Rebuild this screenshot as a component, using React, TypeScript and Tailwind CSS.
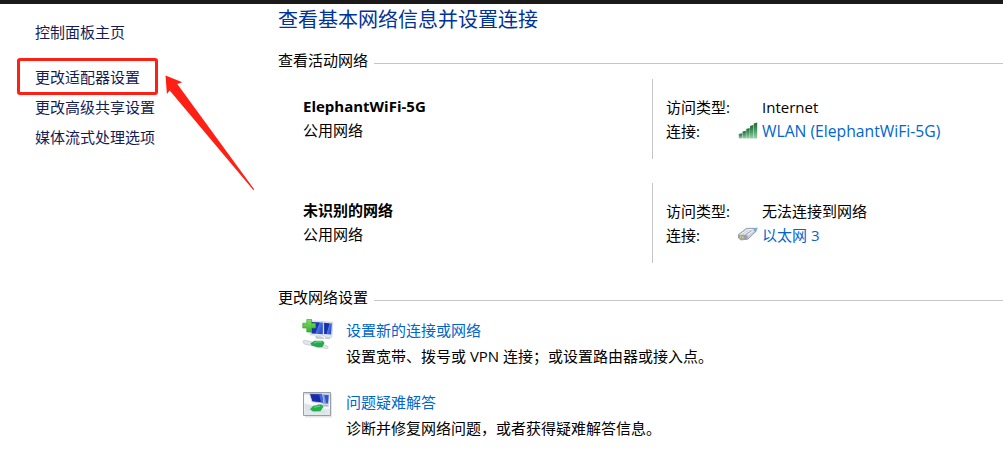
import type { ReactNode } from 'react';

function SectionHeading({ children }: { children: ReactNode }) {
  return (
    <div className="flex h-6 items-center">
      <h2 className="w-24 whitespace-nowrap pb-0.5 leading-6">{children}</h2>
      <span className="mt-1 h-px flex-1 bg-[#c6c6c6]" />
    </div>
  );
}

function SignalIcon() {
  return (
    <svg width="20" height="18" viewBox="0 0 20 18">
      <defs>
        <linearGradient id="bar" x1="0" y1="0" x2="0" y2="1">
          <stop offset="0" stopColor="#1d6a38" />
          <stop offset="0.5" stopColor="#4b9a66" />
          <stop offset="1" stopColor="#9fd0ab" />
        </linearGradient>
      </defs>
      <g fill="url(#bar)">
        <path d="M.8 12l3.4-.8V16.5H.8z" />
        <path d="M4.5 9.6l3.4-.9V16.5H4.5z" />
        <path d="M8.2 6.9l3.5-1V16.5H8.2z" />
        <path d="M12 4l3.4-1v13.5H12z" />
        <path d="M15.7 1.4l3.5-1V16.5h-3.5z" />
      </g>
    </svg>
  );
}

function EthernetIcon() {
  return (
    <svg width="20" height="18" viewBox="0 0 20 18">
      <path d="M12 2.8l7.8-1.4-1.6 4.4-3.6 2.4z" fill="#62b8e2" />
      <path d="M.5 8.5L8.5 2.4l7.5-.1 1.4 3.5-7.6 7.4-7 .7L.5 12z" fill="#cbd1da" stroke="#828b98" strokeWidth=".8" />
      <path d="M1 9.2l6.6-.4 2 .9v3.3l-6.8.7L1 12z" fill="#9aa1aa" />
      <path d="M2 9.8l1.3.1v2.7L2 12zM4.4 10l1.2-.1v2.9H4.4z" fill="#dcc877" />
      <path d="M3 8.2l6.5-4.4 5-.5M6 8.1l6-3.4M9.5 9l5.7-4" stroke="#f3f6fa" strokeWidth=".9" fill="none" />
      <path d="M7.6 8.7L13 4.7" stroke="#8993a2" strokeWidth=".6" fill="none" />
    </svg>
  );
}

function NewConnectionIcon() {
  return (
    <svg width="32" height="32" viewBox="0 0 32 32">
      <defs>
        <linearGradient id="screen" x1="0" y1="0" x2="1" y2=".4">
          <stop offset="0" stopColor="#12239a" />
          <stop offset=".62" stopColor="#1836b8" />
          <stop offset=".68" stopColor="#4f76e0" />
          <stop offset="1" stopColor="#2750cd" />
        </linearGradient>
        <linearGradient id="plus" x1="0" y1="0" x2="0" y2="1">
          <stop offset="0" stopColor="#85dc68" />
          <stop offset="1" stopColor="#37b32c" />
        </linearGradient>
      </defs>
      <path d="M19 2.4l12 .8-1 15-3 .8-6-2z" fill="#e0e4eb" stroke="#c0c6cf" strokeWidth=".5" />
      <path d="M21.3 3.8l8.6.6-.8 11.2-7-.6z" fill="url(#screen)" />
      <path d="M7 1.6l14.8.8v14.4L8 16z" fill="#e6e9ee" stroke="#c5cbd4" strokeWidth=".5" />
      <path d="M9 3l11.8.6v11.6L9.6 14.4z" fill="url(#screen)" />
      <path d="M13 17l7 .6 3 2.4-9-.3zM23 18l5 .6v1.6l-5-.4z" fill="#c4cad2" />
      <path d="M1 22.6c0-1.2 1.4-1.6 2.8-1.2l21 5.3c2 .6 1.6 3.2-.3 2.9L4 25.4c-2-.2-3-1.3-3-2.8z" fill="#e1e6ea" stroke="#b5bcc3" strokeWidth=".6" />
      <path d="M8.5 24.2l4-2.4 8-.1 2 2-2 4.2-4.5.5-6.5-2z" fill="#26a853" />
      <path d="M12 24l3-1.2 5 .2" stroke="#74d98b" fill="none" />
      <path d="M4.8.4h4.8V4.2h4v4.8h-4v4H4.8v-4h-4V4.2h4z" fill="url(#plus)" stroke="#36a52e" strokeWidth=".7" />
    </svg>
  );
}

function TroubleshootIcon() {
  return (
    <svg width="32" height="28" viewBox="0 0 32 28">
      <path d="M3 3h27v23.5H3z" fill="#c9c9c9" opacity=".5" />
      <path d="M1.5 1.5h27v23h-27z" fill="#f7f9fb" stroke="#9a9da3" />
      <path d="M2 2h26v1.5H2z" fill="#d3d6db" />
      <path d="M2 19l26-1.5V24H2z" fill="#e3e8ee" />
      <path d="M19 3l8.4.3-.8 10.4-6-.7z" fill="#7897df" stroke="#dce2ec" strokeWidth=".8" />
      <path d="M22.5 4l4 .2-.5 7.8-2-.3z" fill="#2d55c8" />
      <path d="M7.5 2.6l12.8.2 1.5 9.4-11.8-1.5z" fill="#182ba8" stroke="#d3dae8" strokeWidth=".8" />
      <path d="M17 3.2l3 .1 1.2 8-2.2-.3z" fill="#3f68d8" />
      <path d="M15 13l11 1 1 1.8-10-.5z" fill="#b4bbc6" />
      <path d="M2.5 12.5l7 1.8 15 6.4-2 1.8L4 19.4l-1.5-2z" fill="#dbe1e5" />
      <path d="M8 18.2l3.2-3.4 8-1.2 2.3 2.2-3 4.4-7.5.4z" fill="#22b14c" />
      <path d="M12 16.3l6-1.2" stroke="#6ad786" />
    </svg>
  );
}

interface NetworkProps {
  name: string;
  access: string;
  icon: ReactNode;
  link: ReactNode;
}

function Network({ name, access, icon, link }: NetworkProps) {
  return (
    <div className="flex h-20 pl-[25px]">
      <div className="w-[349px] pt-[15px]">
        <p className="font-bold">{name}</p>
        <p>公用网络</p>
      </div>
      <div className="flex-1 border-l border-[#c6c6c6] pt-4 pl-[13px]">
        <div className="flex">
          <span className="w-24">访问类型:</span>
          <span>{access}</span>
        </div>
        <div className="flex">
          <span className="w-[72px]">连接:</span>
          <span className="w-6 pt-[3px]">{icon}</span>
          <a className="whitespace-nowrap text-[#0066cc]">{link}</a>
        </div>
      </div>
    </div>
  );
}

function Task({ icon, title, text }: { icon: ReactNode; title: string; text: string }) {
  return (
    <div className="flex h-[72px] pl-6">
      <div className="w-11 pt-0.5">{icon}</div>
      <div className="leading-[26px]">
        <a className="block text-[#0066cc]">{title}</a>
        <p className="whitespace-nowrap">{text}</p>
      </div>
    </div>
  );
}

export default function App() {
  return (
    <div className="relative h-[471px] overflow-hidden bg-white font-['Open_Sans','Noto_Sans_CJK_SC',sans-serif] text-[15px] leading-6 text-black">
      <div className="h-1 bg-[#1a1a1a]" />
      <div className="flex">
        <nav className="flex w-[278px] flex-col pt-4 pl-[17px] text-[#151c55]">
          <a className="pl-[18px]">控制面板主页</a>
          <a className="mt-[14px] flex h-[37px] w-[141px] items-center rounded-[3px] border-[3px] border-[#ff2015] pl-[15px] whitespace-nowrap">
            更改适配器设置
          </a>
          <a className="pl-[18px]">更改高级共享设置</a>
          <a className="mt-1.5 pl-[18px]">媒体流式处理选项</a>
        </nav>
        <main className="flex-1">
          <h1 className="h-[45px] pt-px text-[20px] leading-[30px] text-[#003399]">查看基本网络信息并设置连接</h1>
          <SectionHeading>查看活动网络</SectionHeading>
          <div className="flex flex-col gap-6 pt-1.5">
            <Network
              name="ElephantWiFi-5G"
              access="Internet"
              icon={<SignalIcon />}
              link={<span className="text-[15.7px]">WLAN (ElephantWiFi-5G)</span>}
            />
            <Network name="未识别的网络" access="无法连接到网络" icon={<EthernetIcon />} link="以太网 3" />
          </div>
          <div className="pt-[23px]">
            <SectionHeading>更改网络设置</SectionHeading>
          </div>
          <div className="pt-[7px]">
            <Task icon={<NewConnectionIcon />} title="设置新的连接或网络" text="设置宽带、拨号或 VPN 连接；或设置路由器或接入点。" />
            <Task icon={<TroubleshootIcon />} title="问题疑难解答" text="诊断并修复网络问题，或者获得疑难解答信息。" />
          </div>
        </main>
      </div>
      <svg className="absolute top-[72px] left-[160px]" width="98" height="122" viewBox="160 72 98 122">
        <path d="M165.5 75.5l16.8 6.7-5 1.8 77 105.5-1 .5-83.6-99.5-2.8 3.5z" fill="#ff2015" />
      </svg>
    </div>
  );
}
